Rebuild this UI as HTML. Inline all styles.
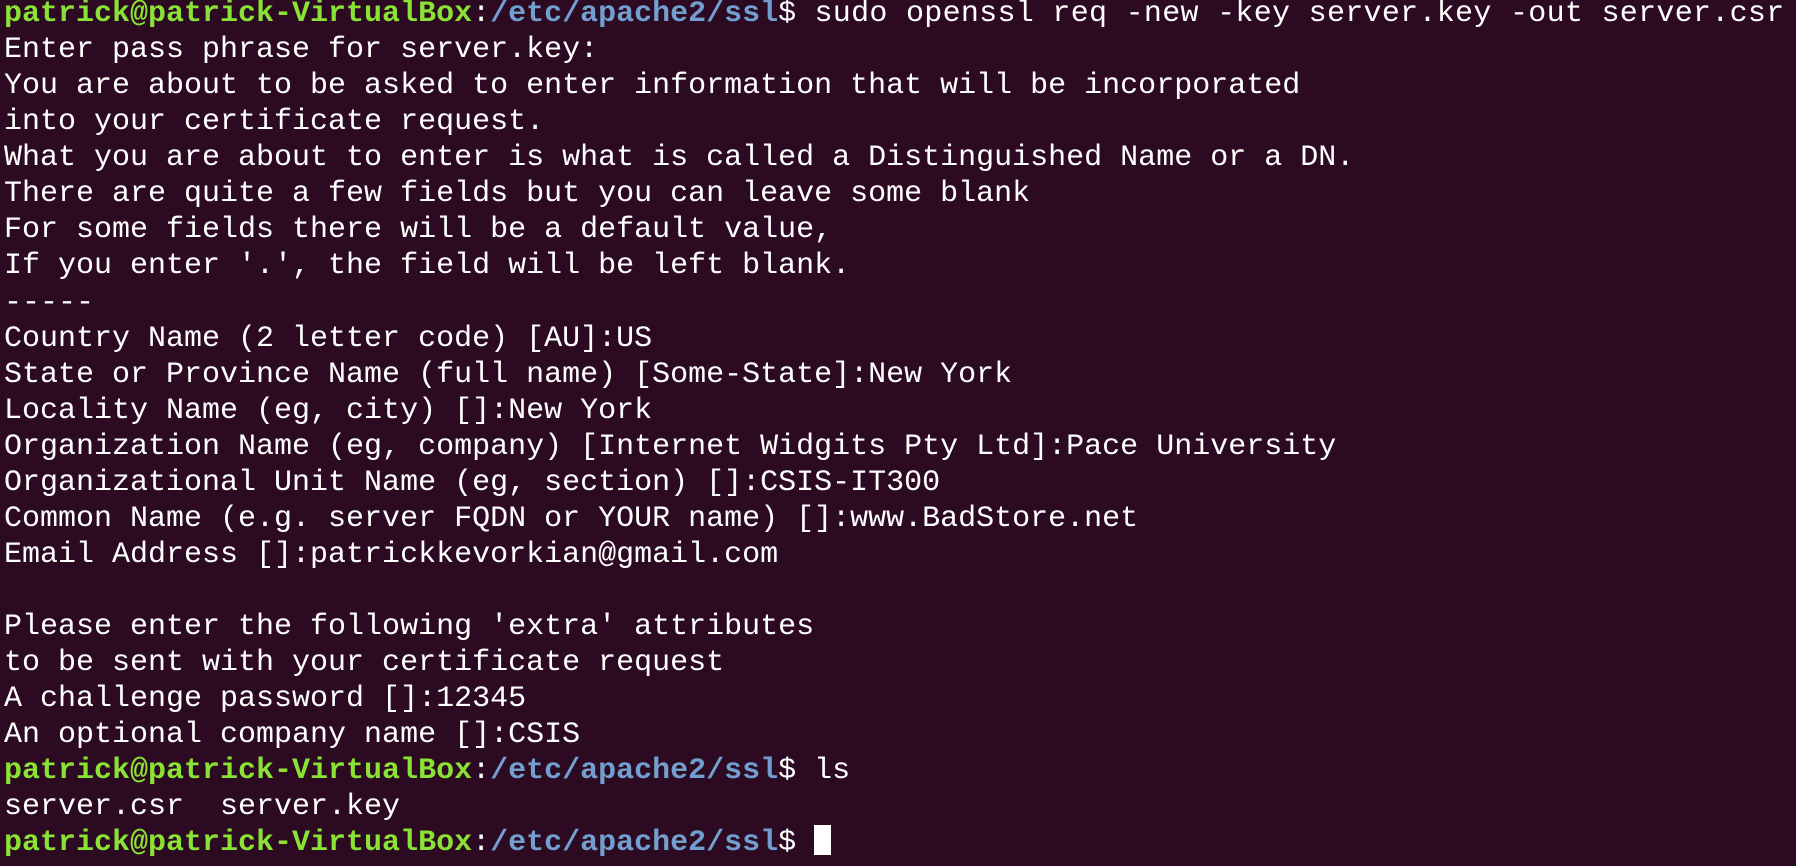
<!DOCTYPE html>
<html><head><meta charset="utf-8"><style>
html,body{margin:0;padding:0;background:#2c0a22;width:1796px;height:866px;overflow:hidden}
pre{margin:0;position:absolute;left:4px;top:-4px;font-family:"Liberation Mono",monospace;font-size:30px;line-height:36.06px;color:#ffffff;letter-spacing:0px;white-space:pre}
.g{color:#8ae234;font-weight:bold}
.b{color:#729fcf;font-weight:bold}
.w{letter-spacing:0.3px}
.c{display:inline-block;width:17px;height:30px;background:#fff;vertical-align:-5px}
</style></head><body>
<pre><span class="g">patrick@patrick-VirtualBox</span>:<span class="b">/etc/apache2/ssl</span>$<span class="w"> sudo openssl req -new -key server.key -out server.csr</span>
Enter pass phrase for server.key:
You are about to be asked to enter information that will be incorporated
into your certificate request.
What you are about to enter is what is called a Distinguished Name or a DN.
There are quite a few fields but you can leave some blank
For some fields there will be a default value,
If you enter '.', the field will be left blank.
-----
Country Name (2 letter code) [AU]:US
State or Province Name (full name) [Some-State]:New York
Locality Name (eg, city) []:New York
Organization Name (eg, company) [Internet Widgits Pty Ltd]:Pace University
Organizational Unit Name (eg, section) []:CSIS-IT300
Common Name (e.g. server FQDN or YOUR name) []:www.BadStore.net
Email Address []:patrickkevorkian@gmail.com

Please enter the following 'extra' attributes
to be sent with your certificate request
A challenge password []:12345
An optional company name []:CSIS
<span class="g">patrick@patrick-VirtualBox</span>:<span class="b">/etc/apache2/ssl</span>$ ls
server.csr  server.key
<span class="g">patrick@patrick-VirtualBox</span>:<span class="b">/etc/apache2/ssl</span>$ <span class="c"></span></pre>
</body></html>
